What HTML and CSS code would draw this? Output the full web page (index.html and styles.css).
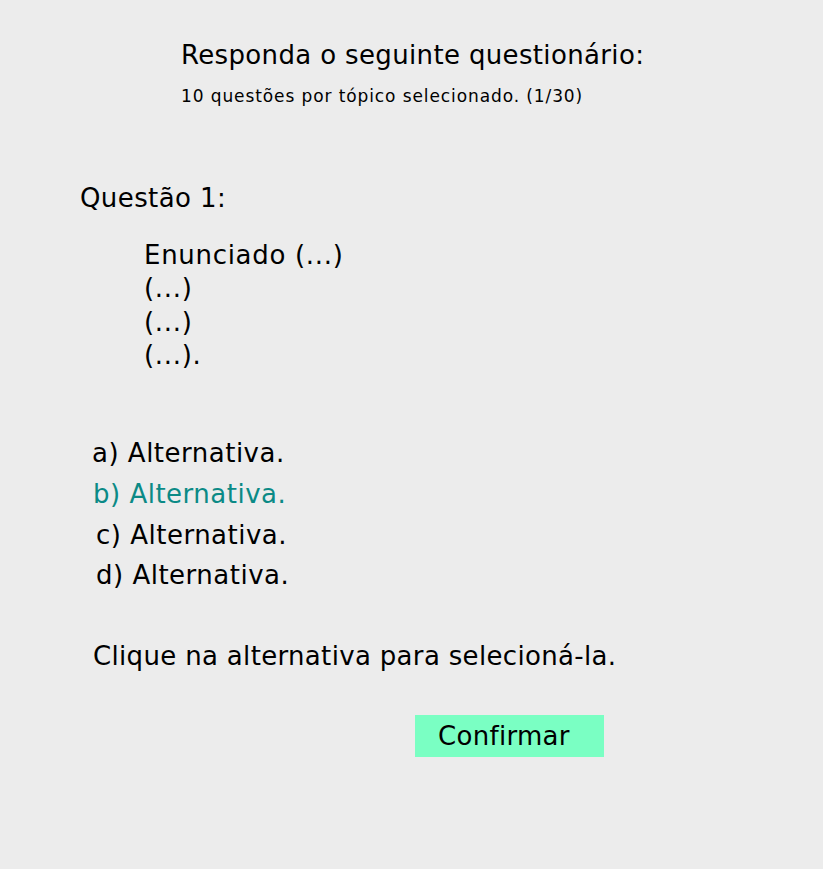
FILE: index.html
```html
<!DOCTYPE html>
<html lang="pt">
<head>
<meta charset="utf-8">
<link rel="stylesheet" href="styles.css">
</head>
<body>
<div class="page">
  <header class="head">
    <h1 class="title">Responda o seguinte questionário:</h1>
    <p class="subtitle">10 questões por tópico selecionado. (1/30)</p>
  </header>
  <section class="question">
    <h2 class="q-label">Questão 1:</h2>
    <div class="statement">
      <div class="st-line">Enunciado (...)</div>
      <div class="st-line">(...)</div>
      <div class="st-line">(...)</div>
      <div class="st-line">(...).</div>
    </div>
  </section>
  <ul class="options">
    <li class="opt opt-a">a) Alternativa.</li>
    <li class="opt opt-b selected">b) Alternativa.</li>
    <li class="opt opt-c">c) Alternativa.</li>
    <li class="opt opt-d">d) Alternativa.</li>
  </ul>
  <p class="hint">Clique na alternativa para selecioná-la.</p>
  <div class="actions">
    <button class="confirm">Confirmar</button>
  </div>
</div>
</body>
</html>
```

FILE: styles.css
```css
html, body {
  margin: 0;
  padding: 0;
  background: #ececec;
}
body {
  font-family: "DejaVu Sans", Verdana, sans-serif;
  color: #000;
  width: 823px;
  height: 869px;
  overflow: hidden;
}
.page {
  display: flex;
  flex-direction: column;
}
.head {
  padding: 40px 0 0 181px;
}
.title {
  margin: 0;
  font-size: 26px;
  letter-spacing: 0.35px;
  font-weight: normal;
  line-height: 30px;
}
.subtitle {
  margin: 16px 0 0 0;
  font-size: 17px;
  letter-spacing: 0.9px;
  line-height: 20px;
}
.question {
  padding: 77px 0 0 80px;
}
.q-label {
  margin: 0;
  font-size: 26px;
  letter-spacing: 0.4px;
  font-weight: normal;
  line-height: 30px;
}
.statement {
  margin: 26px 0 0 64px;
  font-size: 26px;
  letter-spacing: 0.7px;
  line-height: 33.3px;
}
.options {
  list-style: none;
  margin: 66px 0 0 0;
  padding: 0;
  display: flex;
  flex-direction: column;
  gap: 10.7px;
  font-size: 26px;
  letter-spacing: 0.5px;
  line-height: 30px;
}
.opt { cursor: pointer; }
.opt-a { padding-left: 92px; }
.opt-b { padding-left: 93px; }
.opt-c { padding-left: 96px; }
.opt-d { padding-left: 96px; }
.selected { color: #0b8a86; }
.hint {
  margin: 50.4px 0 0 93px;
  font-size: 26px;
  letter-spacing: 0.33px;
  line-height: 30px;
}
.actions {
  padding: 44px 0 0 415px;
}
.confirm {
  width: 189px;
  height: 42px;
  border: none;
  background: #7affc3;
  font-family: inherit;
  font-size: 26px;
  letter-spacing: 0.3px;
  color: #000;
  text-align: left;
  padding: 0 0 0 23px;
}
```
